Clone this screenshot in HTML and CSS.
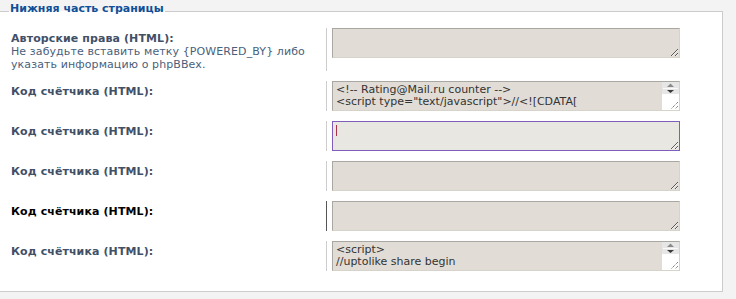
FILE: index.html
```html
<!DOCTYPE html>
<html lang="ru">

<head>
    <meta charset="UTF-8">
    <meta name="viewport" content="width=device-width, initial-scale=1.0">
    <title>Нижняя часть страницы</title>
    <link rel="stylesheet" href="styles.css">
</head>

<body>
    <fieldset class="panel">
        <legend>Нижняя часть страницы</legend>

        <dl class="row">
            <dt>
                <label class="title" for="copyright">Авторские права (HTML):</label>
                <span class="explain">Не забудьте вставить метку {POWERED_BY} либо указать информацию о phpBBex.</span>
            </dt>
            <dd><textarea class="code" id="copyright"></textarea></dd>
        </dl>

        <dl class="row">
            <dt><label class="title" for="counter1">Код счётчика (HTML):</label></dt>
            <dd>
                <div class="field">
                    <textarea class="code" id="counter1">&lt;!-- Rating@Mail.ru counter --&gt;
&lt;script type="text/javascript"&gt;//&lt;![CDATA[</textarea>
                    <div class="scrollbar">
                        <svg class="arrows" width="17" height="12" viewBox="0 0 17 12">
                            <rect width="17" height="12" fill="#e6e6e6" />
                            <path d="M5 5h7L8.5 1.5z" fill="#8a8a8a" />
                            <path d="M1 6.5h15" stroke="#fafafa" stroke-width="1" />
                            <path d="M5 8h7L8.5 11z" fill="#3a3a3a" />
                        </svg>
                        <svg class="grip" width="10" height="10" viewBox="0 0 10 10">
                            <path d="M9 2L2 9M9 6L6 9" stroke="#555" stroke-width="1" stroke-dasharray="1 1" />
                        </svg>
                    </div>
                </div>
            </dd>
        </dl>

        <dl class="row">
            <dt><label class="title" for="counter2">Код счётчика (HTML):</label></dt>
            <dd>
                <div class="field">
                    <textarea class="code active" id="counter2"></textarea>
                    <span class="caret"></span>
                </div>
            </dd>
        </dl>

        <dl class="row">
            <dt><label class="title" for="counter3">Код счётчика (HTML):</label></dt>
            <dd><textarea class="code" id="counter3"></textarea></dd>
        </dl>

        <dl class="row hover">
            <dt><label class="title" for="counter4">Код счётчика (HTML):</label></dt>
            <dd><textarea class="code" id="counter4"></textarea></dd>
        </dl>

        <dl class="row">
            <dt><label class="title" for="counter5">Код счётчика (HTML):</label></dt>
            <dd>
                <div class="field">
                    <textarea class="code" id="counter5">&lt;script&gt;
//uptolike share begin</textarea>
                    <div class="scrollbar">
                        <svg class="arrows" width="17" height="12" viewBox="0 0 17 12">
                            <rect width="17" height="12" fill="#e6e6e6" />
                            <path d="M5 5h7L8.5 1.5z" fill="#8a8a8a" />
                            <path d="M1 6.5h15" stroke="#fafafa" stroke-width="1" />
                            <path d="M5 8h7L8.5 11z" fill="#3a3a3a" />
                        </svg>
                        <svg class="grip" width="10" height="10" viewBox="0 0 10 10">
                            <path d="M9 2L2 9M9 6L6 9" stroke="#555" stroke-width="1" stroke-dasharray="1 1" />
                        </svg>
                    </div>
                </div>
            </dd>
        </dl>
    </fieldset>
</body>

</html>
```

FILE: styles.css
```css
* {
    box-sizing: border-box;
}

body {
    margin: 0;
    background-color: #f3f3f3;
    font-family: "DejaVu Sans", Verdana, sans-serif;
    font-size: 11px;
}

.panel {
    margin: 0 13px 0 -10px;
    padding: 6px 0 20px 20px;
    border: 1px solid #cccccc;
    background-color: #fff;
    min-width: 0;
}

.panel legend {
    margin-left: -2px;
    padding: 2px 1px 7px;
    font-weight: bold;
    font-size: 11px;
    line-height: 13px;
    color: #115098;
}

.row {
    display: flex;
    margin: 0 0 10px;
}

.row:last-child {
    margin-bottom: 0;
}

.row dt {
    width: 315px;
    padding: 4px 10px 0 0;
    line-height: 13px;
    letter-spacing: 0.1px;
}

.title {
    display: block;
    font-weight: bold;
    color: #425067;
}

.explain {
    display: block;
    color: #4a5f7c;
}

.row dd {
    margin: 0;
    padding-left: 5px;
    border-left: 1px solid #cccccc;
}

.row.hover .title {
    color: #000;
}

.row.hover dd {
    border-left-color: #555;
}

.field {
    position: relative;
    width: 348px;
}

.code {
    display: block;
    width: 348px;
    height: 30px;
    margin: 0;
    padding: 2px 3px;
    border: 1px solid;
    border-color: #a9a7a1 #d6d3ca #d6d3ca #a9a7a1;
    background-color: #e1ddd6;
    font-family: "DejaVu Sans", Verdana, sans-serif;
    font-size: 11px;
    line-height: 12px;
    color: #333;
    overflow: hidden;
    resize: vertical;
    outline: none;
}

.code.active {
    border-color: #7f5db8;
    background-color: #e8e7e1;
}

.caret {
    position: absolute;
    left: 4px;
    top: 4px;
    width: 1px;
    height: 11px;
    background-color: #a8324a;
}

.scrollbar {
    position: absolute;
    top: 1px;
    right: 1px;
    bottom: 1px;
    width: 17px;
    background-color: #fff;
}

.arrows {
    display: block;
}

.grip {
    position: absolute;
    right: 0;
    bottom: 0;
}
```
